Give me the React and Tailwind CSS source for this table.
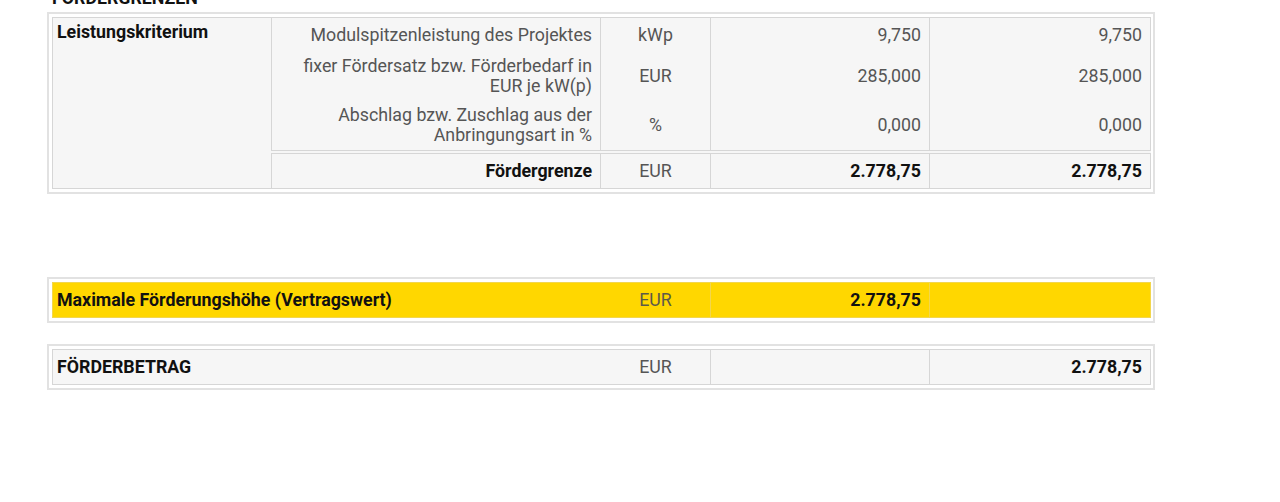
const cols = [219, 329, 110, 219, 221];

const ColGroup = () => (
	<colgroup>
		{cols.map((w, i) => <col key={i} style={{ width: w }} />)}
	</colgroup>
);

const Frame = ({ children, className = "" }) => (
	<div className={"ml-[47px] w-[1108px] border-2 border-[#e2e2e2] bg-white p-[3px] " + className}>
		<table className="w-full table-fixed border-collapse">
			<ColGroup />
			<tbody>{children}</tbody>
		</table>
	</div>
);

// base cell: side borders only, padding set per row
const base = "border-x border-[#d6d6d6] bg-[#f6f6f6] px-[8px] leading-[20px] align-middle";
const single = "border border-[#d6d6d6] bg-[#f6f6f6] px-[8px] py-[7px] leading-[20px] align-middle";
const yellow = "border border-[#f2d64e] bg-[#ffd700] px-[8px] py-[7px] leading-[20px]";
const total = "border border-t-4 border-double border-[#d6d6d6] bg-[#f6f6f6] px-[8px] py-[7px] leading-[20px] align-middle";

const App = () => {
	return (
		<div className="min-h-[502px] bg-white text-[17.8px] text-[#555]" style={{ fontFamily: "Roboto, 'Liberation Sans', sans-serif" }}>
			<div className="-mt-[12px] mb-[4px] ml-[52px] h-[20px] font-bold text-[#111] leading-[20px]">FÖRDERGRENZEN</div>

			<Frame>
				<tr>
					<td rowSpan={4} className="border border-[#d6d6d6] bg-[#f6f6f6] pl-[4px] pr-[8px] pt-[4px] align-top leading-[20px] font-bold text-[#111]">Leistungskriterium</td>
					<td className={base + " border-t py-[7px] text-right"}>Modulspitzenleistung des Projektes</td>
					<td className={base + " border-t py-[7px] text-center"}>kWp</td>
					<td className={base + " border-t py-[7px] text-right"}>9,750</td>
					<td className={base + " border-t py-[7px] text-right"}>9,750</td>
				</tr>
				<tr>
					<td className={base + " pt-[4px] pb-[4px] text-right"}>fixer Fördersatz bzw. Förderbedarf in EUR je kW(p)</td>
					<td className={base + " pt-[4px] pb-[4px] text-center"}>EUR</td>
					<td className={base + " pt-[4px] pb-[4px] text-right"}>285,000</td>
					<td className={base + " pt-[4px] pb-[4px] text-right"}>285,000</td>
				</tr>
				<tr>
					<td className={base + " pt-[5px] pb-[5px] text-right"}>Abschlag bzw. Zuschlag aus der Anbringungsart in %</td>
					<td className={base + " pt-[5px] pb-[5px] text-center"}>%</td>
					<td className={base + " pt-[5px] pb-[5px] text-right"}>0,000</td>
					<td className={base + " pt-[5px] pb-[5px] text-right"}>0,000</td>
				</tr>
				<tr>
					<td className={total + " text-right font-bold text-[#111]"}>Fördergrenze</td>
					<td className={total + " text-center"}>EUR</td>
					<td className={total + " text-right font-bold text-[#111]"}>2.778,75</td>
					<td className={total + " text-right font-bold text-[#111]"}>2.778,75</td>
				</tr>
			</Frame>

			<Frame className="mt-[83px]">
				<tr>
					<td colSpan={2} className={yellow + " border-r-transparent pl-[4px] font-bold text-[#111] whitespace-nowrap"}>Maximale Förderungshöhe (Vertragswert)</td>
					<td className={yellow + " border-l-transparent text-center text-[#5c5a4a]"}>EUR</td>
					<td className={yellow + " text-right font-bold text-[#111]"}>2.778,75</td>
					<td className={yellow}></td>
				</tr>
			</Frame>

			<Frame className="mt-[21px]">
				<tr>
					<td colSpan={2} className={single + " border-r-transparent pl-[4px] font-bold text-[#111]"}>FÖRDERBETRAG</td>
					<td className={single + " border-l-transparent text-center"}>EUR</td>
					<td className={single}></td>
					<td className={single + " text-right font-bold text-[#111]"}>2.778,75</td>
				</tr>
			</Frame>
		</div>
	);
};

export default App;
